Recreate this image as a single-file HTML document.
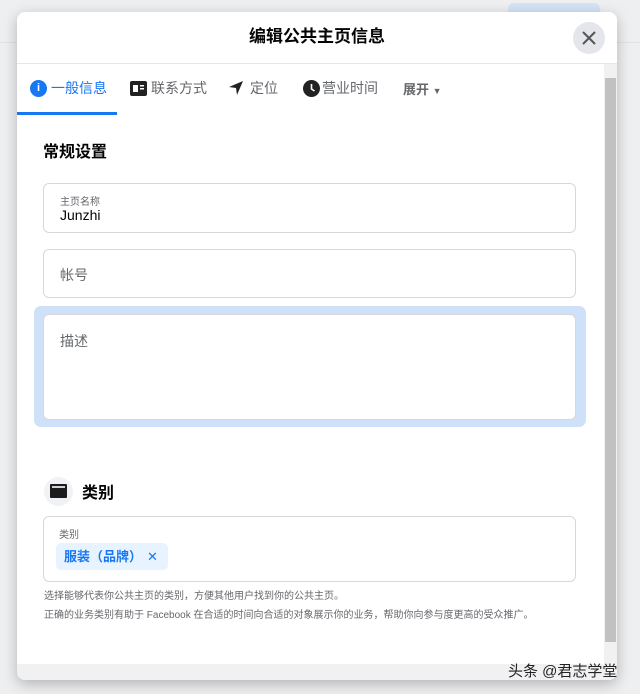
<!DOCTYPE html>
<html><head><meta charset="utf-8"><style>
*{box-sizing:border-box;margin:0;padding:0}
body{width:640px;height:694px;background:#eeeff1;font-family:"Liberation Sans","Noto Sans CJK SC",sans-serif;position:relative;overflow:hidden}
.a{position:absolute}
.inp{position:absolute;left:43px;width:533px;border:1px solid #d6d8db;border-radius:6px;background:#fff}
</style></head><body>
<div class="a" style="left:508px;top:3px;width:92px;height:40px;background:#d4e3f6;border-radius:6px"></div>
<div class="a" style="left:0;top:42px;width:640px;height:1px;background:#e2e2e2"></div>
<div class="a" style="left:17px;top:12px;width:600px;height:668px;background:#fff;border-radius:8px;box-shadow:0 4px 14px rgba(0,0,0,.25);overflow:hidden">
  <div class="a" style="left:0;top:0;width:600px;height:51px;text-align:center;line-height:50px;font-size:17px;font-weight:bold;color:#050505">编辑公共主页信息</div>
  <div class="a" style="left:556px;top:10px;width:32px;height:32px;border-radius:50%;background:#e4e6eb">
    <svg width="32" height="32" viewBox="0 0 32 32"><path d="M10 10L22 22M22 10L10 22" stroke="#555" stroke-width="2"/></svg></div>
  <div class="a" style="left:0;top:51px;width:600px;height:1px;background:#e4e6eb"></div>
  <div class="a" style="left:587px;top:52px;width:13px;height:600px;background:#f1f1f1"></div>
  <div class="a" style="left:588px;top:66px;width:11px;height:564px;background:#c1c1c1"></div>
  <div class="a" style="left:0;top:652px;width:600px;height:16px;background:#f1f1f1"></div>
  <div class="a" style="left:13px;top:66px;font-size:14px;color:#1877f2;display:flex;align-items:center">
    <span style="display:inline-block;width:17px;height:17px;border-radius:50%;background:#1877f2;color:#fff;font-size:11px;font-weight:bold;text-align:center;line-height:17px;margin-right:4px">i</span>一般信息</div>
  <div class="a" style="left:0;top:100px;width:100px;height:3px;background:#1877f2"></div>
  <div class="a" style="left:113px;top:66px;font-size:14px;color:#65676b;display:flex;align-items:center">
    <svg width="17" height="15" viewBox="0 0 17 15" style="margin-right:4px"><rect x="0" y="0" width="17" height="15" rx="2" fill="#222"/><rect x="3" y="4" width="5" height="7" fill="#fff"/><rect x="10" y="4" width="4" height="1.5" fill="#fff"/><rect x="10" y="7" width="4" height="1.5" fill="#fff"/></svg>联系方式</div>
  <div class="a" style="left:211px;top:66px;font-size:14px;color:#65676b;display:flex;align-items:center">
    <svg width="16" height="16" viewBox="0 0 16 16" style="margin-right:6px"><path d="M15 1L1 7l7 1 1 7z" fill="#222"/></svg>定位</div>
  <div class="a" style="left:286px;top:66px;font-size:14px;color:#65676b;display:flex;align-items:center">
    <svg width="17" height="17" viewBox="0 0 17 17" style="margin-right:2px"><circle cx="8.5" cy="8.5" r="8.5" fill="#222"/><path d="M8.5 4v5l3 2" stroke="#fff" stroke-width="1.6" fill="none"/></svg>营业时间</div>
  <div class="a" style="left:386px;top:67px;font-size:13px;font-weight:bold;color:#65676b">展开 <span style="font-size:9px">▼</span></div>
  <div class="a" style="left:26px;top:129px;font-size:16px;font-weight:bold;color:#050505;margin-top:-3px">常规设置</div>
</div>
<div class="inp" style="top:183px;height:50px"><div class="a" style="left:16px;top:9px;font-size:10px;color:#65676b">主页名称</div><div class="a" style="left:16px;top:23px;font-size:14px;color:#050505">Junzhi</div></div>
<div class="inp" style="top:249px;height:49px"><div class="a" style="left:16px;top:15px;font-size:14px;color:#65676b">帐号</div></div>
<div class="a" style="left:34px;top:306px;width:552px;height:121px;background:#cfe1f8;border-radius:7px"></div>
<div class="inp" style="top:314px;height:106px"><div class="a" style="left:16px;top:16px;font-size:14px;color:#65676b">描述</div></div>
<div class="a" style="left:44px;top:477px;width:29px;height:29px;border-radius:50%;background:#f0f2f5"></div>
<div class="a" style="left:50px;top:484px;width:17px;height:14px;background:#1c1c1c;border-radius:1px"><div style="margin:2px 2px 0;height:1.5px;background:#fff;opacity:.8"></div></div>
<div class="a" style="left:82px;top:479px;font-size:16px;font-weight:bold;color:#050505">类别</div>
<div class="inp" style="top:516px;height:66px"><div class="a" style="left:15px;top:9px;font-size:10px;color:#65676b">类别</div>
  <div class="a" style="left:12px;top:26px;width:112px;height:27px;background:#e7f3ff;border-radius:5px;color:#1877f2;font-size:13px;font-weight:bold;line-height:27px;padding-left:8px">服装（品牌）<span style="position:absolute;left:91px;font-weight:normal">✕</span></div></div>
<div class="a" style="left:44px;top:587px;font-size:10px;color:#65676b">选择能够代表你公共主页的类别，方便其他用户找到你的公共主页。</div>
<div class="a" style="left:44px;top:606px;font-size:10px;color:#65676b">正确的业务类别有助于 Facebook 在合适的时间向合适的对象展示你的业务，帮助你向参与度更高的受众推广。</div>
<div class="a" style="left:508px;top:660px;font-size:15px;color:#222">头条 @君志学堂</div>
</body></html>
